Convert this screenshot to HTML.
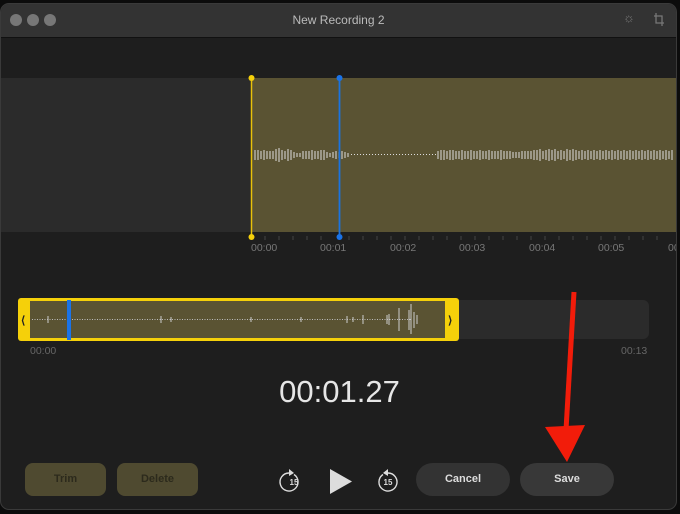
<!DOCTYPE html><html><head><style>
body{margin:0;width:680px;height:514px;background:#0c0c0c;overflow:hidden;font-family:"Liberation Sans",sans-serif;position:relative}
.win{position:absolute;left:0;top:3px;width:677px;height:507px;background:#1e1e1e;border-radius:9px;overflow:hidden;border:1px solid #3a3a3a;box-sizing:border-box}
.tb{position:absolute;left:0;top:0;right:0;height:33px;background:#333;border-bottom:1px solid #111}
.dot{position:absolute;top:10px;width:12px;height:12px;border-radius:50%;background:#777}
.t{position:absolute;color:#ccc}
.btn{position:absolute;top:459px;height:33px;border-radius:8px;font-size:11px;font-weight:bold;text-align:center;line-height:33px}
</style></head><body>
<div class="win">
<div class="tb">
<div class="dot" style="left:9px"></div><div class="dot" style="left:26px"></div><div class="dot" style="left:43px"></div>
<div class="t" style="left:0;right:0;text-align:center;top:9px;font-size:12px;color:#bbb">New Recording 2</div>
<div class="t" style="left:622px;top:6px;font-size:13px;color:#777">☼</div>
<svg style="position:absolute;left:652px;top:9px" width="12" height="14"><path d="M3 0V10H11M1 3H9V13" stroke="#777" fill="none" stroke-width="1.3"/></svg>
</div>
<div style="position:absolute;left:0;top:74px;width:250px;height:154px;background:#2b2b2b"></div>
<div style="position:absolute;left:250px;top:74px;width:430px;height:154px;background:#5a5333"></div>
<svg style="position:absolute;left:0;top:0" width="680" height="260">
<g stroke="#ddd" stroke-width="1">
<path d="M254 146v10M257 146v10M260 147v8M263 146v10M266 147v8M269 147v8M272 147v8M275 145v12M278 144v14M281 146v10M284 147v8M287 145v12M290 146v10M293 148v6M296 149v4M299 149v4M302 147v8M305 147v8M308 147v8M311 146v10M314 147v8M317 147v8M320 146v10M323 146v10M326 148v6M329 149v4M332 148v6M335 147v8M338 148v6M341 147v8M344 148v6M347 149v4"/>
<path d="M350 150.5h85" stroke-dasharray="1 2"/>
<path d="M437 147v8M440 146v10M443 146v10M446 147v8M449 146v10M452 146v10M455 147v8M458 147v8M461 146v10M464 147v8M467 147v8M470 146v10M473 147v8M476 147v8M479 146v10M482 147v8M485 147v8M488 146v10M491 147v8M494 147v8M497 147v8M500 146v10M503 147v8M506 147v8M509 147v8M512 148v6M515 148v6M518 148v6M521 147v8M524 147v8M527 147v8M530 147v8M533 146v10M536 146v10M539 145v12M542 147v8M545 146v10M548 145v12M551 146v10M554 145v12M557 147v8M560 146v10M563 147v8M566 145v12M569 146v10M572 145v12M575 146v10M578 147v8M581 146v10M584 147v8M587 146v10M590 147v8M593 146v10M596 147v8M599 146v10M602 147v8M605 146v10M608 147v8M611 146v10M614 147v8M617 146v10M620 147v8M623 146v10M626 147v8M629 146v10M632 147v8M635 146v10M638 147v8M641 146v10M644 147v8M647 146v10M650 147v8M653 146v10M656 147v8M659 146v10M662 147v8M665 146v10M668 147v8M671 146v10"/>
</g>
<line x1="250.5" y1="74" x2="250.5" y2="232" stroke="#e8c20a" stroke-width="1.5"/>
<circle cx="250.5" cy="74" r="3" fill="#f5d00a"/><circle cx="250.5" cy="233" r="3" fill="#f5d00a"/>
<line x1="338.5" y1="74" x2="338.5" y2="232" stroke="#1a73e0" stroke-width="1.8"/>
<circle cx="338.5" cy="74" r="3" fill="#1a73e8"/><circle cx="338.5" cy="233" r="3" fill="#1a73e8"/>
<g stroke="#444"><path d="M264 232v4M278 232v4M292 232v4M306 232v4M320 232v4M348 232v4M362 232v4M376 232v4M390 232v4M404 232v4M418 232v4M432 232v4M446 232v4M460 232v4M474 232v4M488 232v4M502 232v4M516 232v4M530 232v4M544 232v4M558 232v4M572 232v4M586 232v4M600 232v4M614 232v4M628 232v4M642 232v4M656 232v4"/></g>
<g fill="#777" font-size="10.5" font-family="Liberation Sans"><text x="250" y="247">00:00</text><text x="319" y="247">00:01</text><text x="389" y="247">00:02</text><text x="458" y="247">00:03</text><text x="528" y="247">00:04</text><text x="597" y="247">00:05</text><text x="667" y="247">00</text></g>
</svg>
<div style="position:absolute;left:17px;top:294px;width:441px;height:43px;background:#f5d00a;border-radius:3px"></div>
<div style="position:absolute;left:29px;top:297px;width:415px;height:37px;background:#5a5333"></div>
<div style="position:absolute;left:458px;top:296px;width:190px;height:39px;background:#2b2b2b;border-radius:0 6px 6px 0"></div>
<svg style="position:absolute;left:0;top:290px" width="680" height="60">
<path d="M31 25.5h380" stroke="#bbb" stroke-dasharray="1 1.5"/>
<g stroke="#ccc"><path d="M47 22v7M160 22v7M170 23v5M250 23v5M300 23v5M346 22v7M352 23v5M362 21v9M386 21v9M388 20v11M398 14v23M408 16v20M410 10v30M413 18v16M416 21v9"/></g>
<text x="20" y="30" font-size="11" fill="#222" font-weight="bold">⟨</text><text x="447" y="30" font-size="11" fill="#222" font-weight="bold">⟩</text>
<rect x="66" y="6" width="4" height="40" fill="#1a73e8"/>
</svg>
<div class="t" style="left:29px;top:341px;font-size:10.5px;color:#666">00:00</div>
<div class="t" style="left:620px;top:341px;font-size:10.5px;color:#666">00:13</div>
<div class="t" style="left:0;width:677px;text-align:center;top:370px;font-size:31px;color:#e6e6e6">00:01.27</div>
<div class="btn" style="left:24px;width:81px;background:#4f4a30;color:#2c2a1c">Trim</div>
<div class="btn" style="left:116px;width:81px;background:#4f4a30;color:#2c2a1c">Delete</div>
<div class="btn" style="left:415px;width:94px;background:#333;color:#ddd;border-radius:17px">Cancel</div>
<div class="btn" style="left:519px;width:94px;background:#383838;color:#ddd;border-radius:17px">Save</div>
<svg style="position:absolute;left:270px;top:455px" width="140" height="44">
<g fill="none" stroke="#ddd" stroke-width="1.4"><path d="M18 14a9 9 0 1 0 5 1.5"/><path d="M117 14a9 9 0 1 1 -5 1.5"/></g>
<path d="M18 10l5 4-5 3z" fill="#ddd"/><path d="M117 10l-5 4 5 3z" fill="#ddd"/>
<text x="23" y="26" font-size="8" font-weight="bold" fill="#ddd" text-anchor="middle" font-family="Liberation Sans">15</text>
<text x="117" y="26" font-size="8" font-weight="bold" fill="#ddd" text-anchor="middle" font-family="Liberation Sans">15</text>
<path d="M59 10L59 35L81 22.5Z" fill="#ddd"/>
</svg>
</div>
<svg style="position:absolute;left:0;top:0" width="680" height="514">
<path d="M574 292L566 430" stroke="#f21c0a" stroke-width="5"/>
<path d="M545 427L567 462L585 425Z" fill="#f21c0a"/>
</svg>
</body></html>
